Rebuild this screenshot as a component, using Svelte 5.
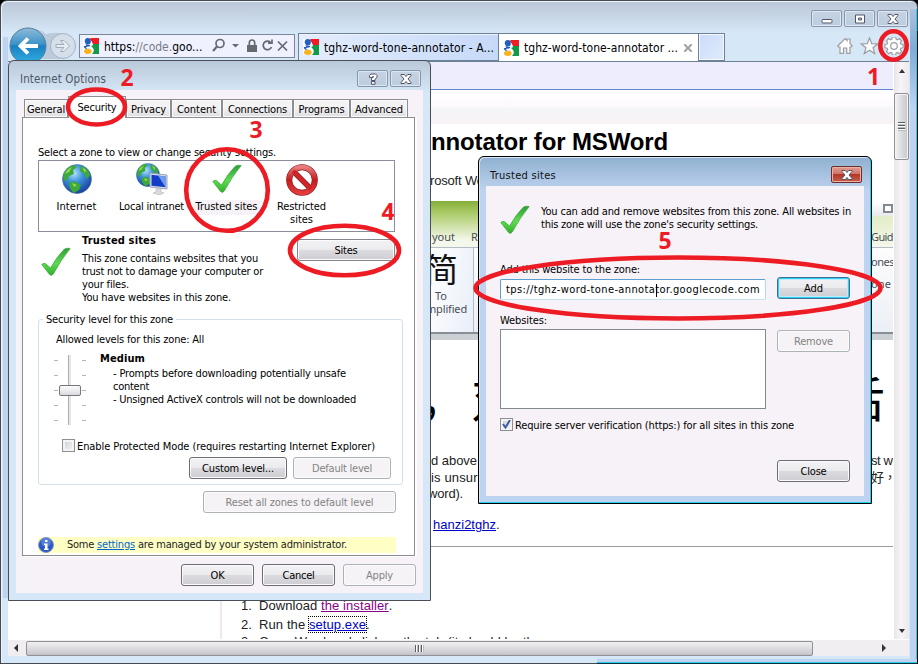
<script>
  // Spreads a line of text over a given width with letter spacing.
  function fit(node, width) {
    if (!width) return;
    const natural = node.getBoundingClientRect().width;
    node.style.letterSpacing = `${(width - natural) / node.textContent.length}px`;
  }

  const tabs = [
    { name: 'General', width: 44, text: 38 },
    { name: 'Security', width: 58, text: 39, active: true },
    { name: 'Privacy', width: 45, text: 35 },
    { name: 'Content', width: 51, text: 39 },
    { name: 'Connections', width: 71, text: 59 },
    { name: 'Programs', width: 57, text: 46 },
    { name: 'Advanced', width: 58, text: 48 }
  ];
  const zones = [
    { icon: 'globe', lines: [['Internet', 40]] },
    { icon: 'intranet', lines: [['Local intranet', 65]] },
    { icon: 'check', lines: [['Trusted sites', 62]], selected: true },
    { icon: 'stop', lines: [['Restricted', 49], ['sites', 23]] }
  ];
  const ticks = [0, 1, 2, 3, 4];
</script>

{#snippet t(text, width)}<span class="t" use:fit={width}>{text}</span>{/snippet}

{#snippet favicon()}
  <svg class="fav" width="16" height="16" viewBox="0 0 16 16">
    <rect width="16" height="16" fill="#fff" />
    <path d="M8 0h8v6H10Q9 3 6.500 1z" fill="#ee1c23" />
    <path d="M10 6h6v10H9q3-3 1-6l-2-2q2 0 2-2z" fill="#119a48" />
    <ellipse cx="4.800" cy="3.300" rx="3" ry="3.300" fill="#1f5fc4" />
    <path d="M1 6l6 1 1 3-5 1q-3-1-2-5z" fill="#1f5fc4" />
    <path d="M0 4h2l1 4H0zM3 9l5-1 1 2-5 1z" fill="#fff" />
    <ellipse cx="4.800" cy="13.300" rx="3.800" ry="2.600" fill="#f9b21c" />
  </svg>
{/snippet}

{#snippet check()}
  <svg width="30" height="30" viewBox="0 0 30 30">
    <defs><linearGradient id="ck" x1="0" y1="0" x2="0" y2="1"><stop offset="0" stop-color="#2f9a3a" /><stop offset=".55" stop-color="#5fdc50" /><stop offset="1" stop-color="#2fae2c" /></linearGradient></defs>
    <path d="M.8 17.500q1.700-1.700 3.600-.9l5.200 4.500Q15.500 10 23.500 2q3-1.500 5.700-.4Q20 12.500 12.300 27q-1.800 2.500-3.700.6z" fill="url(#ck)" stroke="#36a53a" stroke-width=".7" />
  </svg>
{/snippet}

{#snippet globe(size)}
  <svg width={size} height={size} viewBox="0 0 30 30">
    <defs><radialGradient id="gl" cx=".4" cy=".3" r=".75"><stop offset="0" stop-color="#b5e4fa" /><stop offset=".4" stop-color="#3f93dd" /><stop offset="1" stop-color="#14389a" /></radialGradient></defs>
    <circle cx="15" cy="15" r="14.500" fill="url(#gl)" stroke="#4a6f98" stroke-width=".6" />
    <path d="M1.500 11Q4 3 12 1l3 2-4 3 1 4-5 2-2 5-3-1zM19 2q7 2 9 9l-3 4-3-5-4-3zM7 19l5-2 7 4-2 5-5 3q-5-3-5-10z" fill="#3da93b" />
    <path d="M3 10q2-5 7-7l-3 5zM20 3l4 3-1 3zM10 19l5 2-3 2z" fill="#95db4d" />
  </svg>
{/snippet}

{#snippet glyph(kind)}
  <svg width="14" height="12" viewBox="0 0 14 12" fill="#fff" stroke="#535666" stroke-width="1">
    {#if kind === 'min'}
      <rect x="2" y="6.500" width="10" height="3.500" rx="1" />
    {:else if kind === 'max'}
      <path d="M2.500 2h9v8h-9zM5.500 5v2h3V5z" fill-rule="evenodd" />
    {:else if kind === 'help'}
      <path d="M3.500 4.500V2.500L5 1h4.500L11 2.500v2L9 6.200v1.300H5.500V5.500L7.500 4V3.500H6.500v1zM5.500 8.500H9v2.800H5.500z" />
    {:else}
      <path d="M2 1.500h3.300L7 3.500l1.700-2H12v1L9 6l3 3.500v1H8.700L7 8.500l-1.700 2H2v-1L5 6 2 2.500z" />
    {/if}
  </svg>
{/snippet}

<main class="desk">
  <section class="browser">
    <div class="edge left"></div>
    <div class="edge right"></div>
    <div class="edge bottom"></div>
    <div class="corner"></div>
    <header class="caption">
      <span class="wbtn">{@render glyph('min')}</span>
      <span class="wbtn">{@render glyph('max')}</span>
      <span class="wbtn">{@render glyph('close')}</span>
    </header>
    <nav class="bar">
      <svg class="navs" width="70" height="38" viewBox="0 0 70 38">
        <defs><linearGradient id="bk" x1="0" y1="0" x2="0" y2="1"><stop offset="0" stop-color="#8fbbd8" /><stop offset=".45" stop-color="#3c92c8" /><stop offset=".5" stop-color="#1b80c0" /><stop offset="1" stop-color="#32b2e4" /></linearGradient></defs>
        <path d="M20 1q13 1 18 6 8-2 14-1a13 13 0 0 1 0 26H20z" fill="#bccbdc" />
        <circle cx="55" cy="19" r="12.500" fill="#d4dfea" stroke="#a5b2c1" />
        <path d="M48 17.500h8l-3.500-4h3.500l5.500 5.500-5.500 5.500h-3.500l3.500-4h-8z" fill="#e6edf5" stroke="#a2adbb" />
        <circle cx="20" cy="19" r="18" fill="url(#bk)" stroke="#54809f" />
        <path d="M30 19H13M20 11.500L12.500 19l7.500 7.500" fill="none" stroke="#fff" stroke-width="3.800" />
      </svg>
      <div class="address">
        {@render favicon()}
        <span class="url" use:fit={98}>https:<i>//code.</i>goo...</span>
        <svg width="76" height="16" viewBox="0 0 76 16" fill="none" stroke="#666a70" stroke-width="1.700">
          <circle cx="8" cy="5.500" r="4" /><path d="M5 8.500L1 13" stroke-width="2.200" />
          <path d="M20 6h7l-3.500 3.500z" fill="#666a70" stroke="none" />
          <path d="M35 7h10v7H35z" fill="#666a70" stroke="none" /><path d="M37.300 7V5q0-3 2.700-3t2.700 3v2" />
          <path d="M58.500 4.300A4.300 4.300 0 1 0 59.500 9M56 5.200h4V1.500" />
          <path d="M66.500 3.500l9 9M75.500 3.500l-9 9" transform="translate(-.5)" />
        </svg>
      </div>
      <div class="btab blue">{@render favicon()}{@render t('tghz-word-tone-annotator - A...', 170)}</div>
      <div class="btab white">{@render favicon()}{@render t('tghz-word-tone-annotator ...', 154)}<svg width="8" height="8" viewBox="0 0 8 8"><path d="M0 0l8 8M8 0L0 8" stroke="#a5a5a8" stroke-width="2.200" /></svg></div>
      <div class="newtab"></div>
      <svg class="tools" width="68" height="18" viewBox="0 0 68 18" fill="#fff" stroke="#9b9da0" stroke-width="1.200">
        <path d="M.8 9L8 1.500 10 3.500V2h3v4.500L15.200 9l-1 1H13v6.400H9.700V11H6.500v5.400H3V10H1.600z" />
        <path d="M32.500 1l2.200 5.600 6 .3-4.700 3.800 1.700 5.900-5.200-3.400-5.200 3.400 1.700-5.900-4.700-3.800 6-.3z" />
        <path d="M55.300 1h3.400l.4 2.200 1.300.6 1.900-1.300 2.300 2.300-1.300 1.900.6 1.300 2.200.4v3.400l-2.200.4-.6 1.300 1.300 1.900-2.300 2.300-1.900-1.300-1.300.6-.4 2h-3.400l-.4-2-1.300-.6-1.900 1.300-2.300-2.300 1.300-1.900-.6-1.300-2.200-.4V8.400l2.200-.4.6-1.300-1.300-1.900 2.300-2.300 1.900 1.300 1.300-.6z" transform="translate(0 -1)" />
        <circle cx="57" cy="9" r="3.300" />
      </svg>
    </nav>
    <div class="view">
      <div class="pane">
        <div class="page">
          <div class="lav"></div>
          <div class="band1"></div>
          <div class="band2"></div>
          <article>
            <h2>{@render t('nnotator for MSWord', 237)}</h2>
            <p class="intro">{@render t('rosoft Word', 65)}</p>
            <div class="ribbon">
              <div class="rhead">
                <span>{@render t('yout', 23)}</span><span class="rr">R</span>
                <div class="rend"><b class="rctl"></b><span>{@render t('Guid', 22)}</span></div>
              </div>
              <div class="rbody">
                <div class="rgroup"><span class="han">简</span><span class="to">To</span><span class="simp">{@render t('mplified', 41)}</span></div>
                <div class="rtext"><span>{@render t('ones', 23)}</span><span>{@render t('one', 20)}</span></div>
              </div>
              <div class="rfoot"></div>
            </div>
            <div class="bighan"><span class="c1">，</span><span class="c2">对</span><span class="c3">后</span></div>
            <p class="row">{@render t('d above', 46)}<span class="re">st we</span></p>
            <p class="row">{@render t('is unsure', 54)}<span class="re">好，</span></p>
            <p class="row vord">{@render t('word).', 35)}</p>
            <p class="row hz"><a href="#hanzi">{@render t('hanzi2tghz', 63)}</a>.</p>
            <hr />
            <ol>
              <li><em>1.</em><span>{@render t('Download ', 62)}<a class="seen" href="#installer">{@render t('the installer', 67)}</a>.</span></li>
              <li><em>2.</em><span>{@render t('Run the ', 50)}<a class="dots" href="#setup">{@render t('setup.exe', 57)}</a>.</span></li>
              <li class="last"><em>3.</em><span>{@render t('Open Word and click on the tab (it should be there', 294)}</span></li>
            </ol>
          </article>
        </div>
        <div class="vscroll"><i class="up"></i><div class="vthumb"><b></b></div><i class="down"></i></div>
      </div>
      <div class="hscroll"><i class="lf"></i><div class="hthumb"><b></b></div><i class="rt"></i></div>
    </div>
  </section>

  <section class="dlg options">
    <header><span class="ttl">{@render t('Internet Options', 86)}</span><span class="wbtn">{@render glyph('help')}</span><span class="wbtn">{@render glyph('close')}</span></header>
    <div class="client">
      <div class="tabs">
        {#each tabs as tab}
          <div class="tab" class:active={tab.active} style:width="{tab.width}px">{@render t(tab.name, tab.text)}</div>
        {/each}
      </div>
      <div class="panel">
        <div class="line">{@render t('Select a zone to view or change security settings.', 238)}</div>
        <div class="zones">
          {#each zones as zone}
            <div class="zone" class:selected={zone.selected}>
              <div class="zicon">
                {#if zone.icon === 'globe'}{@render globe(30)}
                {:else if zone.icon === 'intranet'}
                  <div class="net">{@render globe(24)}
                    <svg class="pc" width="20" height="23" viewBox="0 0 20 23"><path d="M1 1l17 2v14L1 15z" fill="#d8dde6" stroke="#9ca5b5" /><path d="M2.500 2.800l14 1.700v10.800l-14-1.600z" fill="#123ec5" /><path d="M9 3.500l7.500 1v10.800z" fill="#6f9df0" /><path d="M7 16.500l5 .5v3l3 1-5 2-6-2 3-1z" fill="#d9dade" stroke="#b5b7be" stroke-width=".6" /></svg>
                  </div>
                {:else if zone.icon === 'check'}{@render check()}
                {:else}
                  <svg width="32" height="32" viewBox="0 0 32 32"><defs><linearGradient id="st" x1="0" y1="0" x2="0" y2="1"><stop offset="0" stop-color="#e87c7c" /><stop offset=".5" stop-color="#c41a1e" /><stop offset="1" stop-color="#e23c3c" /></linearGradient></defs><circle cx="16" cy="16" r="12.800" fill="#fff" stroke="#8d1518" stroke-width="6" /><path d="M7 7l18 18" stroke="#8d1518" stroke-width="5.500" /><circle cx="16" cy="16" r="12.800" fill="none" stroke="url(#st)" stroke-width="4.800" /><path d="M7 7l18 18" stroke="#cf2529" stroke-width="4.200" /></svg>
                {/if}
              </div>
              {#each zone.lines as [text, width]}<span class="zl">{@render t(text, width)}</span>{/each}
            </div>
          {/each}
        </div>
        <div class="about">
          <div class="acheck">{@render check()}</div>
          <div class="atext">
            <strong>{@render t('Trusted sites', 74)}</strong>
            <span>{@render t('This zone contains websites that you', 176)}</span>
            <span>{@render t('trust not to damage your computer or', 181)}</span>
            <span>{@render t('your files.', 47)}</span>
            <span>{@render t('You have websites in this zone.', 149)}</span>
          </div>
          <button class="b sites">{@render t('Sites', 23)}</button>
        </div>
        <div class="group">
          <div class="legend">{@render t('Security level for this zone', 127)}</div>
          <div class="allowed">{@render t('Allowed levels for this zone: All', 148)}</div>
          <div class="level">
            <div class="slider">
              <div class="ticks">{#each ticks as k}<i></i>{/each}</div>
              <div class="track"><b></b></div>
              <div class="ticks">{#each ticks as k}<i></i>{/each}</div>
            </div>
            <div class="ltext">
              <strong>{@render t('Medium', 45)}</strong>
              <span>{@render t('- Prompts before downloading potentially unsafe', 233)}</span>
              <span>{@render t('content', 36)}</span>
              <span>{@render t('- Unsigned ActiveX controls will not be downloaded', 243)}</span>
            </div>
          </div>
          <label class="protect"><i class="cb"></i>{@render t('Enable Protected Mode (requires restarting Internet Explorer)', 298)}</label>
          <div class="gbtns">
            <button class="b dark">{@render t('Custom level...', 72)}</button>
            <button class="b off">{@render t('Default level', 60)}</button>
          </div>
        </div>
        <button class="b off reset">{@render t('Reset all zones to default level', 148)}</button>
        <div class="note">
          <svg width="16" height="16" viewBox="0 0 16 16"><circle cx="8" cy="8" r="7.500" fill="#2a58c8" stroke="#8c9cb8" /><circle cx="8" cy="5" r="5" fill="#7ea2e8" opacity=".5" /><path d="M7 3h2.500v2H7zM6 6.500h3.500v5h1V13H6v-1.500h1V8H6z" fill="#fff" /></svg>
          <span class="ntext">{@render t('Some ', 30)}<a href="#settings">{@render t('settings', 38)}</a>{@render t(' are managed by your system administrator.', 212)}</span>
        </div>
      </div>
      <footer>
        <button class="b dark">{@render t('OK', 14)}</button>
        <button class="b dark">{@render t('Cancel', 32)}</button>
        <button class="b off">{@render t('Apply', 27)}</button>
      </footer>
    </div>
  </section>

  <section class="dlg trusted">
    <header><span class="ttl">{@render t('Trusted sites', 66)}</span><span class="wbtn red">{@render glyph('close')}</span></header>
    <div class="client">
      <div class="lead">{@render check()}<div><span>{@render t('You can add and remove websites from this zone. All websites in', 310)}</span><span>{@render t("this zone will use the zone's security settings.", 217)}</span></div></div>
      <div class="cols">
        <div class="c-left">
          <div class="line">{@render t('Add this website to the zone:', 140)}</div>
          <div class="input">{@render t('tps://tghz-word-tone-annotator.googlecode.com', 254)}<i class="caret"></i></div>
          <div class="line web">{@render t('Websites:', 47)}</div>
          <div class="list"></div>
        </div>
        <div class="c-right">
          <button class="b add">{@render t('Add', 19)}</button>
          <button class="b off">{@render t('Remove', 39)}</button>
        </div>
      </div>
      <label class="require"><i class="cb"><svg width="9" height="9" viewBox="0 0 9 9"><path d="M1 4l2.500 3.500L8 0" fill="none" stroke="#3e5aa8" stroke-width="2" /></svg></i>{@render t('Require server verification (https:) for all sites in this zone', 279)}</label>
      <button class="b dark close">{@render t('Close', 26)}</button>
    </div>
  </section>

  <svg class="marks" width="918" height="664" viewBox="0 0 918 664">
    <g fill="none" stroke="#ed1c24" stroke-width="4.600">
      <ellipse cx="893.500" cy="45.500" rx="13.200" ry="14.200" />
      <ellipse cx="96.500" cy="107" rx="28.500" ry="17.500" />
      <ellipse cx="227" cy="190" rx="40.800" ry="40.800" />
      <ellipse cx="344.500" cy="250.500" rx="54.500" ry="24.800" />
      <ellipse cx="678" cy="288" rx="202.500" ry="30.500" />
    </g>
    <g fill="#ed1c24">
      <text x="867" y="85">1</text><text x="120.500" y="86">2</text><text x="249.500" y="138">3</text><text x="381.500" y="220">4</text><text x="658.500" y="249">5</text>
    </g>
  </svg>
</main>

<style>
  :global(body) { margin: 0; }
  .desk { position: relative; width: 918px; height: 664px; overflow: hidden; background: #000; font: 11px/13px "DejaVu Sans Condensed", "DejaVu Sans", sans-serif; color: #000; }
  .desk * { box-sizing: border-box; }
  .t { display: inline-block; white-space: pre; }
  svg { display: block; flex: none; }
  a { color: #0000cc; text-decoration: underline; }
  a .t { display: inline; }

  .browser { position: absolute; inset: 0; border: 1px solid #454b52; border-radius: 7px 7px 0 0; background: linear-gradient(#b9c6d5, #d6e7f7 32px); display: flex; flex-direction: column; box-shadow: inset 1px 1px #edf3fa; }
  .edge { position: absolute; }
  .edge.left { left: 2px; top: 36px; width: 5px; height: 561px; background: #bfd3ef; }
  .edge.right { right: 0; top: 8px; width: 7px; height: 654px; background: linear-gradient(#a8c2df, #82abd7 40px, #bdd5f2 100px, #bed3ef 120px); border-right: 1px solid #2cc8ea; }
  .edge.bottom { left: 596px; bottom: -1px; right: 0; height: 5px; background: #bed3ef; border-bottom: 1px solid #06313d; box-shadow: inset 0 -1px #2cc8ea; }
  .corner { position: absolute; right: -1px; top: 30px; width: 1px; height: 633px; background: #000; }
  .caption { height: 32px; padding: 9px 9px 0 0; display: flex; justify-content: flex-end; gap: 2px; flex: none; }
  .wbtn { width: 31px; height: 17px; border: 1px solid #8796ae; border-radius: 2px; background: linear-gradient(#c5d3e3, #bdcddf); box-shadow: inset 0 0 0 1px #dde7f2; display: flex; align-items: center; justify-content: center; flex: none; }
  .bar { height: 28px; display: flex; position: relative; padding-left: 7px; flex: none; }
  .navs { margin-top: -6px; }
  .address { margin: 1px 0 0 1px; width: 216px; height: 24px; border: 1px solid #7b8798; background: #eff1fe; display: flex; align-items: center; padding-left: 3px; }
  .url { font-size: 12px; margin-left: 5px; width: 98px; white-space: pre; display: inline-block; flex: none; padding-top: 2px; }
  .url + svg { margin-left: 10px; }
  .url i { font-style: normal; color: #777b84; }
  .btab { height: 28px; width: 200px; border: 1px solid #6d8296; border-right: 0; display: flex; align-items: center; padding-left: 4px; font-size: 12px; }
  .btab .t { margin-left: 5px; padding-top: 2px; }
  .btab.blue { margin-left: 3px; background: linear-gradient(90deg, #e4edfd, #c6d9f8); width: 200px; box-shadow: inset 0 1px #eef4fe; }
  .btab.white { background: #fff; border-bottom: 0; }
  .btab.white svg:last-child { margin-left: 6px; }
  .newtab { width: 27px; border: 1px solid #6d8296; background: linear-gradient(135deg, #c9dcfa, #e0ebfb); box-shadow: inset 0 0 0 1px #f5f9ff; }
  .tools { margin: 4px 0 0 112px; }

  .view { margin: 0 8px 0 7px; height: 595px; background: #fff; border-top: 1px solid #6d8296; flex: none; position: relative; }
  .pane { display: flex; height: 577px; }
  .page { width: 886px; height: 577px; overflow: hidden; background: #fff; color: #222; font: 13px/17px "Liberation Sans", Arial, sans-serif; }
  .lav { height: 28px; background: #eeedfe; border-bottom: 1px solid #6688cc; }
  .band1 { height: 17px; background: linear-gradient(#fff, #fdf9fe); }
  .band2 { height: 17px; background: linear-gradient(#f5f6f7, #f7f2f6); }
  article { margin-left: 212px; border-left: 2px solid #efe9ef; height: 515px; padding-left: 208px; }
  h2 { margin: 0 0 0 1px; padding-top: 4px; font-size: 24px; line-height: 28px; color: #000; height: 32px; }
  p { margin: 0; white-space: nowrap; }
  .intro { margin-top: 16px; height: 17px; }
  .ribbon { margin-top: 12px; width: 464px; height: 139px; display: flex; flex-direction: column; font: 11px/13px "Noto Sans", sans-serif; color: #4a4f56; }
  .rhead { height: 47px; flex: none; background: linear-gradient(#84ae38, #a9ca66 25%, #f4f8ea 85%); display: flex; padding: 29px 0 0 2px; border-bottom: 1px solid #b4bcc6; }
  .rr { margin-left: 16px; }
  .rend { margin: -29px 0 0 auto; width: 23px; height: 46px; background: linear-gradient(#fff 1px, #e8ebef 14px, #e3edc8 16px, #f4f7ea 45px); }
  .rctl { display: block; margin: 3px 1px 17px 12px; height: 9px; border: 2px solid #828890; background: #fff; }
  .rbody { height: 84px; display: flex; justify-content: space-between; background: linear-gradient(#fdfdfe, #eceff5); flex: none; }
  .rgroup { width: 44px; border-right: 1px solid #b5bcc8; display: flex; flex-direction: column; align-items: flex-start; background: linear-gradient(100deg, #fff, #e9eef8); }
  .rgroup .han { font: 33px/33px "Noto Sans CJK SC", sans-serif; color: #111; margin: 4px 0 4px -5px; }
  .rgroup .to { margin-left: 5px; }
  .rgroup .simp { margin-left: -4px; }
  .rtext { width: 23px; display: flex; flex-direction: column; gap: 9px; padding-top: 7px; }
  .rfoot { height: 8px; border-top: 2px solid #888e96; background: #cbd0d4; }
  .bighan { height: 112px; display: flex; font: 48px/112px "Noto Sans CJK SC", sans-serif; color: #000; overflow: hidden; }
  .c1 { width: 48px; margin-left: -11px; }
  .c2 { width: 48px; margin-left: 4px; }
  .c3 { margin-left: 318px; }
  .row { display: flex; height: 16.500px; padding-left: 1px; }
  .re { margin-left: auto; width: 22px; overflow: hidden; letter-spacing: -.4px; font-family: "Liberation Sans", "Noto Sans CJK TC", sans-serif; }
  .vord { margin-left: -3px; }
  .hz { margin: 14px 0 0 2px; height: 17px; }
  hr { margin: 13px 0 0; border: 0; border-top: 1px solid #9c9c9c; }
  ol { list-style: none; margin: 49px 0 0 -189px; padding: 0; }
  li { height: 19px; line-height: 19px; display: flex; white-space: nowrap; }
  .last { margin-top: -2px; }
  em { font-style: normal; width: 18px; }
  .seen { color: #880088; }
  .dots { outline: 1px dotted #000; }

  .vscroll { width: 15px; margin-left: 1px; background: linear-gradient(90deg, #e9e6e9, #f7f3f7 7px, #eceaec); display: flex; flex-direction: column; align-items: center; }
  .up, .down, .lf, .rt { width: 0; height: 0; border: 4px solid transparent; flex: none; }
  .up { border-bottom-color: #333; border-top: 0; border-width: 0 3.500px 4px; margin-top: 7px; }
  .down { border-width: 4px 3.500px 0; border-top-color: #333; margin: auto 0 6px; }
  .vthumb { width: 15px; height: 67px; margin-top: 20px; border: 1px solid #8e9096; border-radius: 2px; background: linear-gradient(90deg, #f3f3f5, #dcdce0 50%, #c5c5cb); display: flex; align-items: center; justify-content: center; box-shadow: inset 0 0 0 1px #f5f5f7; }
  .vthumb b { width: 7px; height: 9px; background: repeating-linear-gradient(#5c5c60 0 1px, #fff 1px 2px, #bbb 2px 3px); }
  .hscroll { height: 16px; margin-top: 1px; background: #f0eef0; display: flex; align-items: center; }
  .lf { border-width: 4px 4px 4px 0; border-right-color: #333; margin-left: 6px; }
  .rt { border-width: 4px 0 4px 4px; border-left-color: #333; margin-left: 69px; }
  .hthumb { width: 787px; height: 15px; margin-left: 8px; border: 1px solid #8e9096; border-radius: 2px; background: linear-gradient(#f0f0f2, #dedee2 45%, #c3c3c9); display: flex; align-items: center; justify-content: center; }
  .hthumb b { width: 9px; height: 7px; background: repeating-linear-gradient(90deg, #5c5c60 0 1px, #fff 1px 2px, #bbb 2px 3px); }

  .dlg { position: absolute; display: flex; flex-direction: column; border: 1px solid #4a4f55; border-radius: 6px 6px 0 0; }
  .dlg > header { display: flex; flex: none; }
  .dlg .client { background: #f7f2f7; flex: 1; display: flex; flex-direction: column; }
  .options { left: 8px; top: 60px; width: 423px; height: 541px; background: linear-gradient(#b9c9d9, #d6e7f7 32px); padding: 0 7px 7px; }
  .options > header { height: 29px; padding: 9px 2px 0 4px; gap: 2px; }
  .ttl { margin-right: auto; padding-top: 3px; font-size: 11.500px; color: #4d5866; }
  .tabs { display: flex; align-items: flex-end; height: 27px; padding-left: 8px; flex: none; }
  .tab { height: 18px; border: 1px solid #8c8e94; border-bottom: 0; background: linear-gradient(#f4f3f4 45%, #dddce0); display: flex; align-items: center; justify-content: center; padding-top: 2px; box-shadow: inset 0 0 0 1px #fbfafb; flex: none; }
  .tab.active { height: 22px; background: #fff; position: relative; margin-bottom: -1px; box-shadow: none; padding: 0 0 1px; }
  .panel { margin-left: 6px; width: 393px; height: 439px; border: 1px solid #8c8e94; box-shadow: 2px 1px #fff; background: #fff; padding: 28px 0 0 15px; flex: none; display: flex; flex-direction: column; }
  .line { height: 13px; flex: none; }
  .zones { margin-top: 1px; width: 357px; height: 72px; border: 1px solid #8a8d9c; display: flex; flex: none; }
  .zone { width: 75px; display: flex; flex-direction: column; align-items: center; flex: none; }
  .zicon { height: 39px; padding-top: 3px; }
  .net { position: relative; width: 32px; height: 32px; margin-top: -1px; }
  .pc { position: absolute; left: 13px; top: 9px; }
  .zl { height: 13px; }
  .selected .zl { background: #f7f2f7; padding: 0 2px; height: 15px; }
  .about { display: flex; margin-top: 2px; height: 85px; flex: none; }
  .acheck { width: 44px; padding: 13px 0 0 3px; }
  .atext { display: flex; flex-direction: column; width: 215px; flex: none; }
  .atext strong { margin-bottom: 5px; }
  .b { font: inherit; color: #000; padding: 0; height: 22px; width: 98px; border: 1px solid #85868c; border-radius: 3px; background: linear-gradient(#f3f2f4, #ebeaec 48%, #dcdbdf 50%, #cecdd2); box-shadow: inset 0 0 0 1px #fbfafc; flex: none; display: flex; align-items: center; justify-content: center; }
  .b.dark { border-color: #6e6b72; }
  .b.off { border-color: #adb2b5; background: #f5f3f5; color: #838383; }
  .sites { margin-top: 5px; }
  .group { width: 365px; height: 166px; border: 1px solid #d3dfe9; border-radius: 3px; flex: none; display: flex; flex-direction: column; align-items: flex-start; }
  .legend { margin: -7px 0 0 4px; padding: 0 3px; background: #fff; }
  .allowed { margin: 7px 0 0 17px; }
  .level { display: flex; margin: 6px 0 0 15px; height: 72px; }
  .slider { display: flex; width: 46px; height: 70px; margin-top: 3px; }
  .ticks { width: 4px; display: flex; flex-direction: column; justify-content: space-between; padding: 5px 0 4px; }
  .ticks i { height: 1px; background: #b5b5b8; }
  .track { width: 24px; height: 70px; display: flex; align-items: center; background: linear-gradient(90deg, transparent 10px, #adadb0 10px 11px, #e4e6e8 11px 13px, transparent 13px); }
  .track b { width: 22px; height: 11px; margin-left: 1px; border: 1px solid #77757c; border-radius: 2px; background: linear-gradient(#fcfcfc, #dcdbe0); }
  .ltext { display: flex; flex-direction: column; }
  .ltext strong { margin-bottom: 2px; }
  .ltext span:not(.t) { padding-left: 13px; }
  .protect, .require { display: flex; align-items: center; gap: 2px; }
  .protect { margin: 15px 0 0 23px; height: 13px; }
  .protect .t, .require .t { padding-top: 1px; }
  .cb { width: 13px; height: 13px; border: 1px solid #8e8f8f; background: linear-gradient(135deg, #cbcfd5, #f6f6f6); box-shadow: inset 0 0 0 2px #f4f4f4; display: flex; align-items: center; justify-content: center; }
  .gbtns { display: flex; gap: 6px; margin: 5px 0 0 150px; }
  .reset { width: 193px; margin: 6px 0 0 165px; }
  .note { display: flex; align-items: center; gap: 13px; width: 358px; height: 16px; margin-top: 24px; background: #ffffc5; flex: none; color: #222; }
  .ntext { margin-top: -2px; }
  .note a { color: #0066cc; }
  .options footer { display: flex; gap: 8px; padding: 8px 0 0 165px; }
  .options footer .b { width: 73px; }

  .trusted { left: 478px; top: 156px; width: 394px; height: 348px; border-color: #000; background: linear-gradient(#8fb0d0, #bed3ef 34px); box-shadow: inset -1px -1px #1cd1ee, inset 1px 1px #d6e7fa; padding: 0 7px 7px; }
  .trusted > header { height: 29px; padding: 9px 2px 0 4px; }
  .trusted .ttl { color: #111; font-size: 11px; padding-top: 3px; }
  .red { background: linear-gradient(#e39c90, #d07466 45%, #b1382b 50%, #c85f4b); border-color: #6a2e2c; box-shadow: inset 0 0 0 1px #e9b0a6; }
  .trusted .client { padding-left: 14px; }
  .lead { display: flex; gap: 11px; margin-top: 19px; height: 30px; }
  .lead div { display: flex; flex-direction: column; }
  .cols { display: flex; margin-top: 28px; gap: 11px; }
  .c-left { width: 266px; }
  .input { margin-top: 3px; height: 21px; border: 1px solid #5b9fd0; border-right-color: #b7d5eb; border-bottom-color: #c7e2f1; border-radius: 2px; background: #fff; display: flex; align-items: center; padding-left: 5px; position: relative; }
  .caret { position: absolute; left: 155px; top: 4px; width: 1px; height: 13px; background: #000; }
  .web { margin-top: 14px; }
  .list { margin-top: 2px; height: 80px; border: 1px solid #828790; background: #fff; }
  .c-right { padding-top: 14px; display: flex; flex-direction: column; gap: 31px; }
  .c-right .b { width: 73px; }
  .add { border-color: #3c6f98; box-shadow: inset 0 0 0 1px #2fd0f8, inset 0 0 0 2px #bfeafa; }
  .require { margin-top: 9px; height: 13px; }
  .close { width: 73px; margin: 29px 0 0 277px; }

  .marks { position: absolute; left: 0; top: 0; }
  .marks text { font: 700 23px "Noto Sans", sans-serif; }
</style>
